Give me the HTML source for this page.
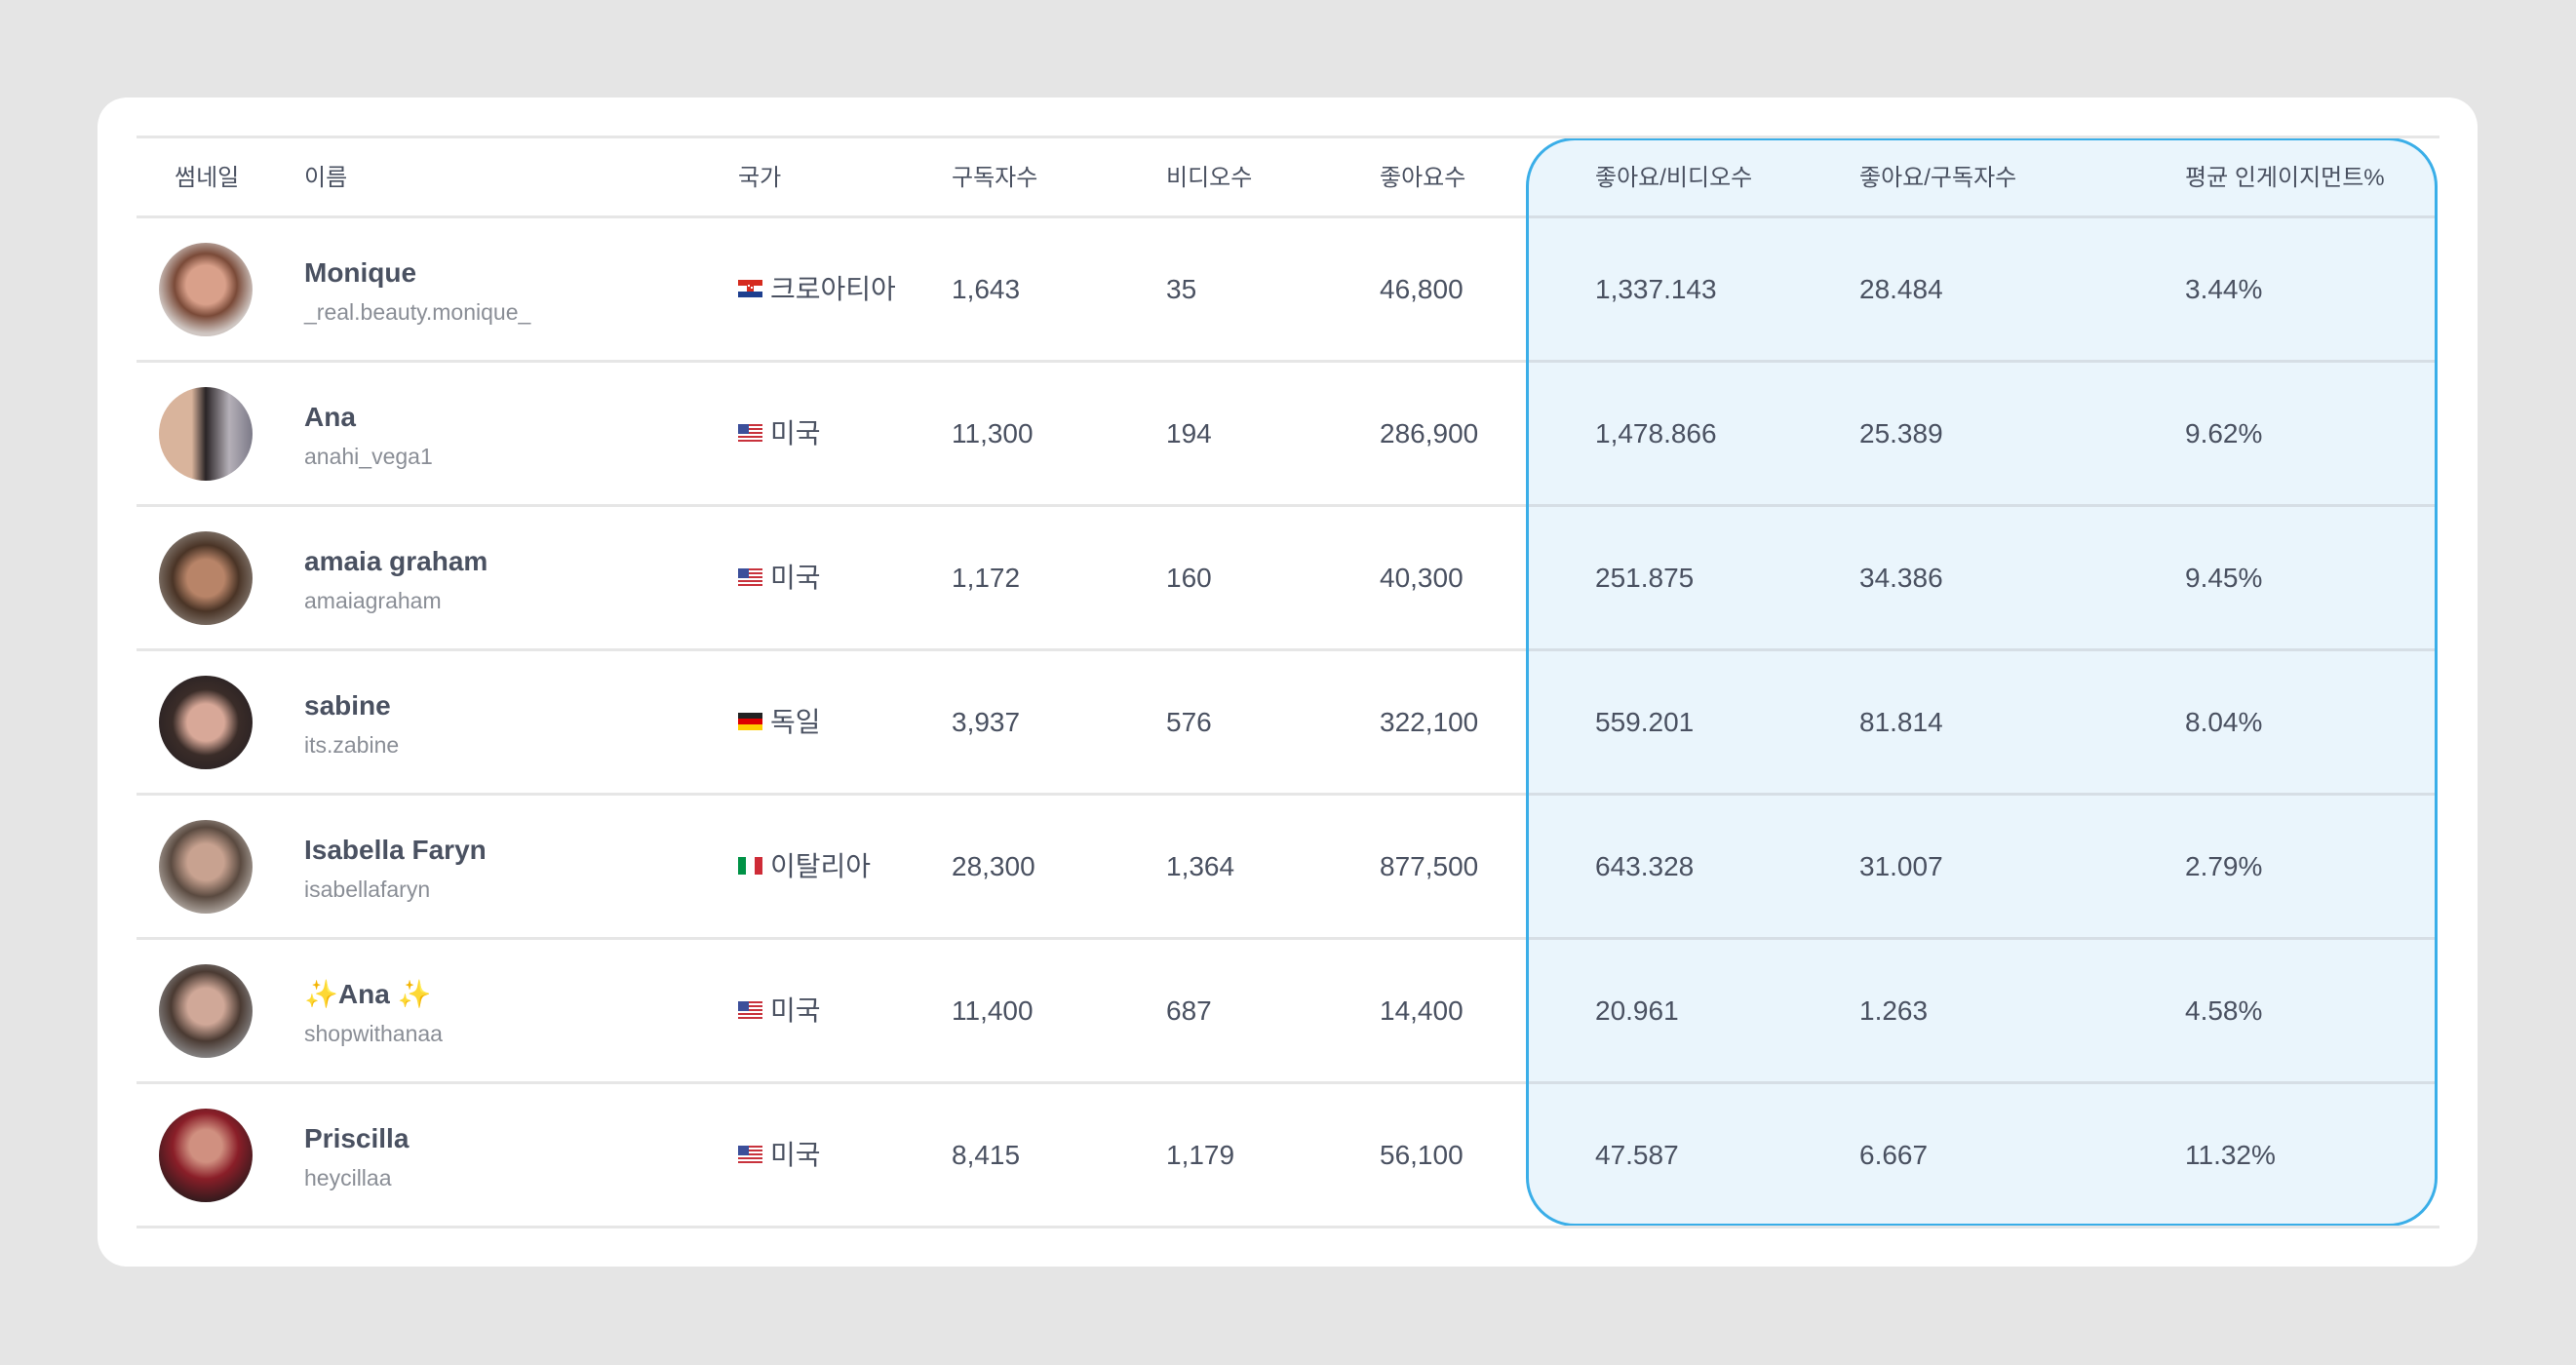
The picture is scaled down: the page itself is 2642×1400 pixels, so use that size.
<!DOCTYPE html>
<html><head><meta charset="utf-8"><style>
*{margin:0;padding:0;box-sizing:border-box}
body{width:2642px;height:1400px;background:#e5e5e5;font-family:"Liberation Sans","Noto Sans CJK KR",sans-serif;color:#4a5161;position:relative;overflow:hidden}
.card{position:absolute;left:100px;top:100px;width:2441px;height:1199px;background:#fff;border-radius:30px}
.hl{position:absolute;left:1565px;top:141px;width:935px;height:1117px;background:#eaf5fc;border:3px solid #3aaee8;border-radius:50px}
.line{position:absolute;left:140px;width:2362px;height:3px;background:#e6e6e6}
.hline{position:absolute;left:1568px;width:929px;height:3px;background:#d6dee5}
.t{position:absolute;white-space:nowrap}
.h{font-size:24px;color:#4a5161;top:162px}
.v{font-size:28px;line-height:28px}
.nm{font-size:28px;font-weight:bold;line-height:28px}
.hd{font-size:23px;color:#8a8e96;line-height:24px}
.av{position:absolute;left:163px;width:96px;height:96px;border-radius:50%}
.fl{position:absolute;left:757px;width:25px;height:18px}
</style></head><body>
<div class="card"></div>
<div class="hl"></div>
<div class="line" style="top:139px"></div>
<div class="line" style="top:221px;width:1425px"></div><div class="hline" style="top:221px"></div>
<div class="line" style="top:369px;width:1425px"></div><div class="hline" style="top:369px"></div>
<div class="line" style="top:517px;width:1425px"></div><div class="hline" style="top:517px"></div>
<div class="line" style="top:665px;width:1425px"></div><div class="hline" style="top:665px"></div>
<div class="line" style="top:813px;width:1425px"></div><div class="hline" style="top:813px"></div>
<div class="line" style="top:961px;width:1425px"></div><div class="hline" style="top:961px"></div>
<div class="line" style="top:1109px;width:1425px"></div><div class="hline" style="top:1109px"></div>
<div class="line" style="top:1257px"></div>

<div class="t h" style="left:179px">썸네일</div>
<div class="t h" style="left:312px">이름</div>
<div class="t h" style="left:757px">국가</div>
<div class="t h" style="left:976px">구독자수</div>
<div class="t h" style="left:1196px">비디오수</div>
<div class="t h" style="left:1415px">좋아요수</div>
<div class="t h" style="left:1636px">좋아요/비디오수</div>
<div class="t h" style="left:1907px">좋아요/구독자수</div>
<div class="t h" style="left:2241px">평균 인게이지먼트%</div>

<svg width="0" height="0" style="position:absolute"><defs>
<g id="us"><rect width="25" height="18" fill="#fff"/><g fill="#c8323c"><rect y="0" width="25" height="2"/><rect y="4" width="25" height="2"/><rect y="8" width="25" height="2"/><rect y="12" width="25" height="2"/><rect y="16" width="25" height="2"/></g><rect width="11" height="10" fill="#3c4f9a"/></g>
</defs></svg>

<div class="av" style="top:249px;background:radial-gradient(circle at 50% 45%,#d9a08a 0 28%,#7a4a38 45%,#cfc6c2 70%)"></div>
<div class="t nm" style="left:312px;top:266px">Monique</div>
<div class="t hd" style="left:312px;top:308px">_real.beauty.monique_</div>
<svg class="fl" style="top:287px" viewBox="0 0 25 18"><rect width="25" height="6" fill="#d52b1e"/><rect y="6" width="25" height="6" fill="#fff"/><rect y="12" width="25" height="6" fill="#1d3f8f"/><rect x="9" y="4" width="7" height="8" fill="#d52b1e"/><rect x="10" y="5" width="2" height="2" fill="#fff"/><rect x="13" y="7" width="2" height="2" fill="#fff"/></svg>
<div class="t v" style="left:790px;top:283px">크로아티아</div>
<div class="t v" style="left:976px;top:283px">1,643</div>
<div class="t v" style="left:1196px;top:283px">35</div>
<div class="t v" style="left:1415px;top:283px">46,800</div>
<div class="t v" style="left:1636px;top:283px">1,337.143</div>
<div class="t v" style="left:1907px;top:283px">28.484</div>
<div class="t v" style="left:2241px;top:283px">3.44%</div>

<div class="av" style="top:397px;background:linear-gradient(90deg,#d9b49c 0 35%,#2a2426 50%,#b5b0b8 75%,#7c7a88)"></div>
<div class="t nm" style="left:312px;top:414px">Ana</div>
<div class="t hd" style="left:312px;top:456px">anahi_vega1</div>
<svg class="fl" style="top:435px" viewBox="0 0 25 18"><use href="#us"/></svg>
<div class="t v" style="left:790px;top:431px">미국</div>
<div class="t v" style="left:976px;top:431px">11,300</div>
<div class="t v" style="left:1196px;top:431px">194</div>
<div class="t v" style="left:1415px;top:431px">286,900</div>
<div class="t v" style="left:1636px;top:431px">1,478.866</div>
<div class="t v" style="left:1907px;top:431px">25.389</div>
<div class="t v" style="left:2241px;top:431px">9.62%</div>

<div class="av" style="top:545px;background:radial-gradient(circle at 50% 50%,#b88468 0 28%,#4a3426 50%,#8a8078 80%)"></div>
<div class="t nm" style="left:312px;top:562px">amaia graham</div>
<div class="t hd" style="left:312px;top:604px">amaiagraham</div>
<svg class="fl" style="top:583px" viewBox="0 0 25 18"><use href="#us"/></svg>
<div class="t v" style="left:790px;top:579px">미국</div>
<div class="t v" style="left:976px;top:579px">1,172</div>
<div class="t v" style="left:1196px;top:579px">160</div>
<div class="t v" style="left:1415px;top:579px">40,300</div>
<div class="t v" style="left:1636px;top:579px">251.875</div>
<div class="t v" style="left:1907px;top:579px">34.386</div>
<div class="t v" style="left:2241px;top:579px">9.45%</div>

<div class="av" style="top:693px;background:radial-gradient(circle at 50% 50%,#d8a898 0 28%,#3a2c28 50%,#2a2224 80%)"></div>
<div class="t nm" style="left:312px;top:710px">sabine</div>
<div class="t hd" style="left:312px;top:752px">its.zabine</div>
<svg class="fl" style="top:731px" viewBox="0 0 25 18"><rect width="25" height="6" fill="#222"/><rect y="6" width="25" height="6" fill="#dd0000"/><rect y="12" width="25" height="6" fill="#ffce00"/></svg>
<div class="t v" style="left:790px;top:727px">독일</div>
<div class="t v" style="left:976px;top:727px">3,937</div>
<div class="t v" style="left:1196px;top:727px">576</div>
<div class="t v" style="left:1415px;top:727px">322,100</div>
<div class="t v" style="left:1636px;top:727px">559.201</div>
<div class="t v" style="left:1907px;top:727px">81.814</div>
<div class="t v" style="left:2241px;top:727px">8.04%</div>

<div class="av" style="top:841px;background:radial-gradient(circle at 50% 45%,#c8a290 0 26%,#5a4a40 50%,#bdb6b0 80%)"></div>
<div class="t nm" style="left:312px;top:858px">Isabella Faryn</div>
<div class="t hd" style="left:312px;top:900px">isabellafaryn</div>
<svg class="fl" style="top:879px" viewBox="0 0 25 18"><rect width="8" height="18" fill="#009246"/><rect x="8" width="9" height="18" fill="#fff"/><rect x="17" width="8" height="18" fill="#ce2b37"/></svg>
<div class="t v" style="left:790px;top:875px">이탈리아</div>
<div class="t v" style="left:976px;top:875px">28,300</div>
<div class="t v" style="left:1196px;top:875px">1,364</div>
<div class="t v" style="left:1415px;top:875px">877,500</div>
<div class="t v" style="left:1636px;top:875px">643.328</div>
<div class="t v" style="left:1907px;top:875px">31.007</div>
<div class="t v" style="left:2241px;top:875px">2.79%</div>

<div class="av" style="top:989px;background:radial-gradient(circle at 50% 45%,#d0a898 0 26%,#4a3a32 50%,#a0a4a8 85%)"></div>
<div class="t nm" style="left:312px;top:1006px"><span style="color:#f5c518;font-weight:normal">✨</span>Ana <span style="color:#f5c518;font-weight:normal">✨</span></div>
<div class="t hd" style="left:312px;top:1048px">shopwithanaa</div>
<svg class="fl" style="top:1027px" viewBox="0 0 25 18"><use href="#us"/></svg>
<div class="t v" style="left:790px;top:1023px">미국</div>
<div class="t v" style="left:976px;top:1023px">11,400</div>
<div class="t v" style="left:1196px;top:1023px">687</div>
<div class="t v" style="left:1415px;top:1023px">14,400</div>
<div class="t v" style="left:1636px;top:1023px">20.961</div>
<div class="t v" style="left:1907px;top:1023px">1.263</div>
<div class="t v" style="left:2241px;top:1023px">4.58%</div>

<div class="av" style="top:1137px;background:radial-gradient(circle at 50% 40%,#d09080 0 22%,#8a1e28 45%,#2a1a1c 80%)"></div>
<div class="t nm" style="left:312px;top:1154px">Priscilla</div>
<div class="t hd" style="left:312px;top:1196px">heycillaa</div>
<svg class="fl" style="top:1175px" viewBox="0 0 25 18"><use href="#us"/></svg>
<div class="t v" style="left:790px;top:1171px">미국</div>
<div class="t v" style="left:976px;top:1171px">8,415</div>
<div class="t v" style="left:1196px;top:1171px">1,179</div>
<div class="t v" style="left:1415px;top:1171px">56,100</div>
<div class="t v" style="left:1636px;top:1171px">47.587</div>
<div class="t v" style="left:1907px;top:1171px">6.667</div>
<div class="t v" style="left:2241px;top:1171px">11.32%</div>
</body></html>
